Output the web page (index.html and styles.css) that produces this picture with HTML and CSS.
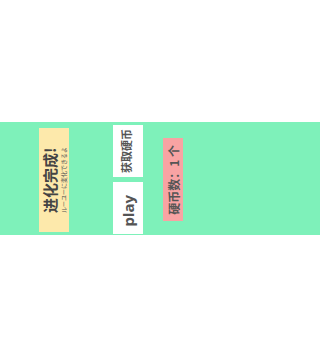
FILE: index.html
```html
<!DOCTYPE html>
<html lang="zh">
<head>
<meta charset="utf-8">
<link rel="stylesheet" href="styles.css">
</head>
<body>
<div class="band">
  <div class="card">
    <div class="rot card-text">
      <div class="title">进化完成!</div>
      <div class="sub">ルーユーに変化できるよ</div>
    </div>
  </div>
  <div class="buttons">
    <div class="btn"><span class="rot btn-label">获取硬币</span></div>
    <div class="btn"><span class="rot btn-play">play</span></div>
  </div>
  <div class="coins"><span class="rot coin-label">硬币数：1 个</span></div>
</div>
</body>
</html>
```
FILE: styles.css
```css
html, body {
  margin: 0;
  padding: 0;
  background: #ffffff;
}
body {
  min-height: 359px;
  font-family: "Noto Sans CJK SC", "Noto Sans", sans-serif;
  color: #4a4a4a;
}
.band {
  margin-top: 122px;
  height: 113px;
  background: #7ef1ba;
  display: flex;
  align-items: flex-start;
  padding-left: 39px;
  box-sizing: border-box;
}
.rot {
  writing-mode: vertical-rl;
  text-orientation: sideways;
  transform: rotate(180deg);
}
.card {
  margin-top: 6px;
  width: 30px;
  height: 104px;
  background: #fde9ab;
  display: flex;
  align-items: center;
  justify-content: center;
}
.card-text {
  display: flex;
  flex-direction: column;
  align-items: center;
  gap: 2px;
}
.title {
  font-size: 15px;
  line-height: 16px;
  font-weight: 700;
  color: #444;
}
.sub {
  font-size: 6px;
  line-height: 7px;
  color: #555;
}
.buttons {
  margin-left: 44px;
  margin-top: 3px;
  display: flex;
  flex-direction: column;
  gap: 5px;
}
.btn {
  width: 30px;
  height: 52px;
  background: #ffffff;
  display: flex;
  align-items: center;
  justify-content: center;
}
.btn-label {
  font-size: 11px;
  line-height: 12px;
  font-weight: 700;
  color: #555;
  margin-right: 4px;
}
.btn-play {
  font-family: "Noto Sans", sans-serif;
  font-size: 15px;
  line-height: 16px;
  font-weight: 700;
  color: #555;
  margin-top: 6px;
}
.coins {
  margin-left: 20px;
  margin-top: 16px;
  width: 20px;
  height: 83px;
  background: #f8a3a3;
  display: flex;
  align-items: center;
  justify-content: center;
}
.coin-label {
  font-size: 12px;
  line-height: 13px;
  font-weight: 700;
  color: #555;
}
```
